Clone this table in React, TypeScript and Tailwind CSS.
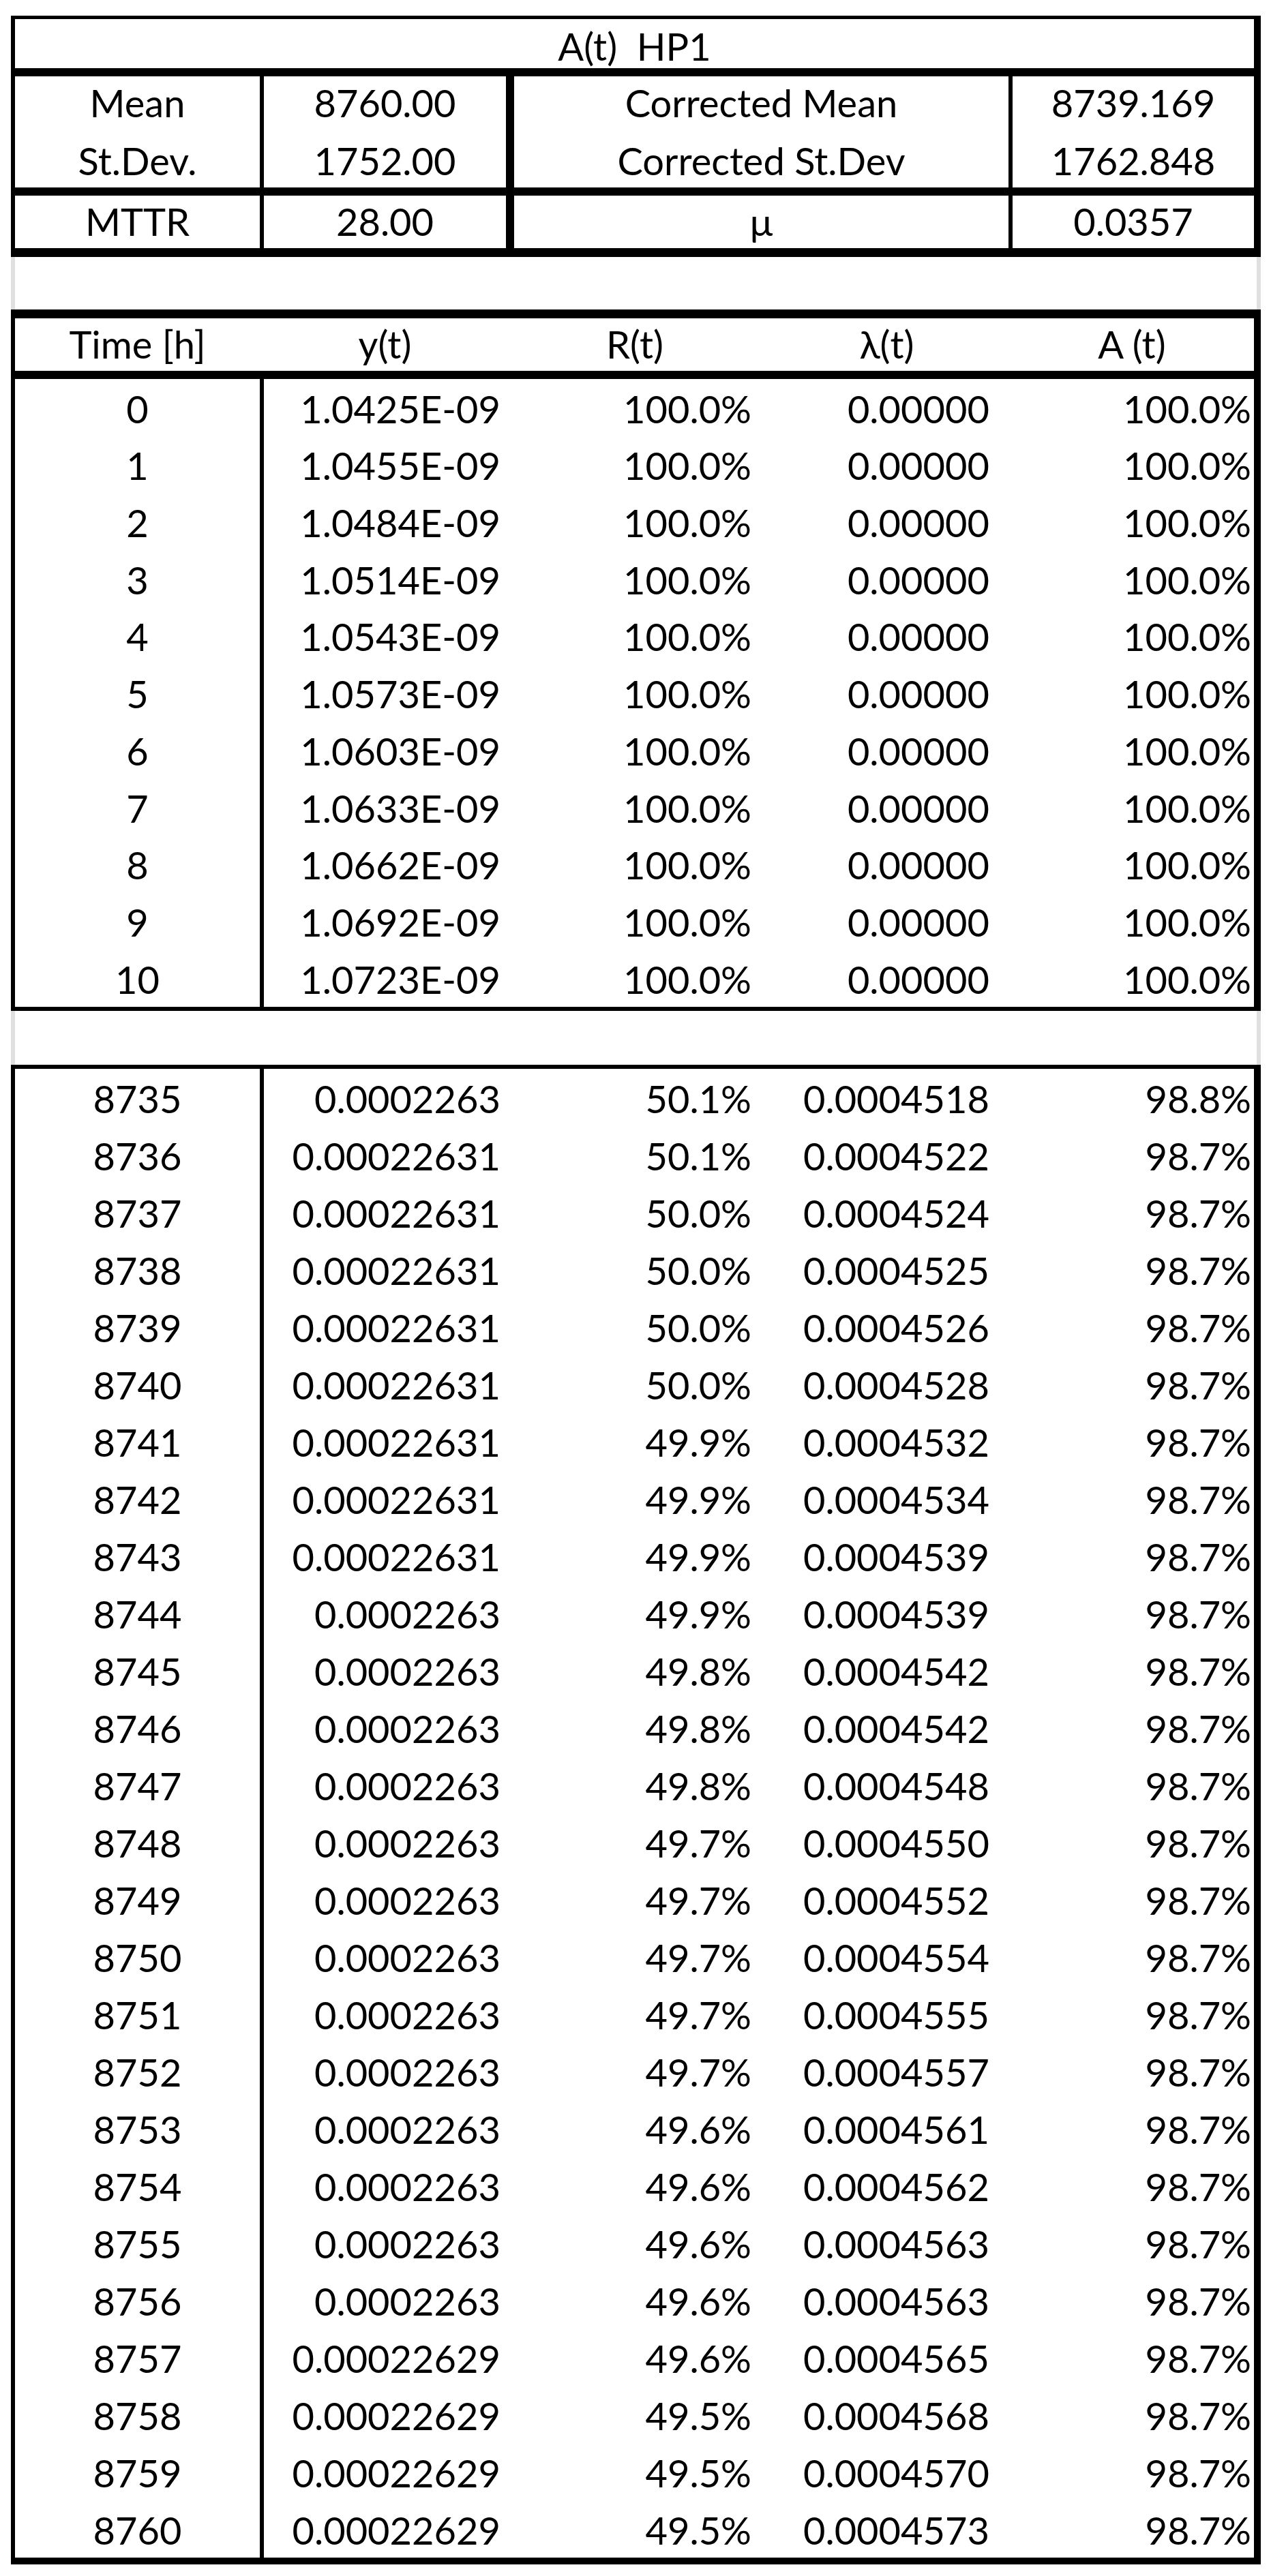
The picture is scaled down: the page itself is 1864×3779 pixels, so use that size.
import React from "react";

const top = [
  { a: "Mean", b: "8760.00", c: "Corrected Mean", e: "8739.169", h: "h-[78px]" },
  { a: "St.Dev.", b: "1752.00", c: "Corrected St.Dev", e: "1762.848", h: "h-[85px]" },
];

const early: [string, string][] = [
  ["0", "1.0425E-09"],
  ["1", "1.0455E-09"],
  ["2", "1.0484E-09"],
  ["3", "1.0514E-09"],
  ["4", "1.0543E-09"],
  ["5", "1.0573E-09"],
  ["6", "1.0603E-09"],
  ["7", "1.0633E-09"],
  ["8", "1.0662E-09"],
  ["9", "1.0692E-09"],
  ["10", "1.0723E-09"],
];

const late: [string, string, string, string, string][] = [
  ["8735", "0.0002263", "50.1%", "0.0004518", "98.8%"],
  ["8736", "0.00022631", "50.1%", "0.0004522", "98.7%"],
  ["8737", "0.00022631", "50.0%", "0.0004524", "98.7%"],
  ["8738", "0.00022631", "50.0%", "0.0004525", "98.7%"],
  ["8739", "0.00022631", "50.0%", "0.0004526", "98.7%"],
  ["8740", "0.00022631", "50.0%", "0.0004528", "98.7%"],
  ["8741", "0.00022631", "49.9%", "0.0004532", "98.7%"],
  ["8742", "0.00022631", "49.9%", "0.0004534", "98.7%"],
  ["8743", "0.00022631", "49.9%", "0.0004539", "98.7%"],
  ["8744", "0.0002263", "49.9%", "0.0004539", "98.7%"],
  ["8745", "0.0002263", "49.8%", "0.0004542", "98.7%"],
  ["8746", "0.0002263", "49.8%", "0.0004542", "98.7%"],
  ["8747", "0.0002263", "49.8%", "0.0004548", "98.7%"],
  ["8748", "0.0002263", "49.7%", "0.0004550", "98.7%"],
  ["8749", "0.0002263", "49.7%", "0.0004552", "98.7%"],
  ["8750", "0.0002263", "49.7%", "0.0004554", "98.7%"],
  ["8751", "0.0002263", "49.7%", "0.0004555", "98.7%"],
  ["8752", "0.0002263", "49.7%", "0.0004557", "98.7%"],
  ["8753", "0.0002263", "49.6%", "0.0004561", "98.7%"],
  ["8754", "0.0002263", "49.6%", "0.0004562", "98.7%"],
  ["8755", "0.0002263", "49.6%", "0.0004563", "98.7%"],
  ["8756", "0.0002263", "49.6%", "0.0004563", "98.7%"],
  ["8757", "0.00022629", "49.6%", "0.0004565", "98.7%"],
  ["8758", "0.00022629", "49.5%", "0.0004568", "98.7%"],
  ["8759", "0.00022629", "49.5%", "0.0004570", "98.7%"],
  ["8760", "0.00022629", "49.5%", "0.0004573", "98.7%"],
];

function DataRow({ t, y, r, l, a, h }: { t: string; y: string; r: string; l: string; a: string; h: string }) {
  return (
    <div className={`flex ${h}`}>
      <div className="w-[359px] flex items-end justify-center pb-[12px]">{t}</div>
      <div className="w-[361px] border-l-[6px] border-black flex items-end justify-end pr-[8px] pb-[12px]">{y}</div>
      <div className="w-[378px] flex items-end justify-end pr-[18px] pb-[12px]">{r}</div>
      <div className="w-[361px] flex items-end justify-end pr-[30px] pb-[12px]">{l}</div>
      <div className="w-[358px] flex items-end justify-end pr-[4px] pb-[12px]">{a}</div>
    </div>
  );
}

function Gap({ h }: { h: string }) {
  return (
    <div className={`w-[1833px] flex justify-between ${h}`}>
      <div className="w-[6px] h-full bg-[#e0e0e0]" />
      <div className="w-[6px] h-full bg-[#e0e0e0]" />
    </div>
  );
}

export default function App() {
  return (
    <div className="w-[1864px] h-[3779px] bg-white text-black font-['Lato'] text-[56px] leading-none pt-[23px] pl-[16px]">
      {/* Top parameter table */}
      <div className="w-[1833px] border-t-[5px] border-l-[6px] border-r-[10px] border-black">
        <div className="h-[72px] flex items-end justify-center pb-[4px] whitespace-pre">A(t)  HP1</div>
        <div className="h-[12px] bg-black" />
        {top.map((row) => (
          <div key={row.a} className={`flex ${row.h}`}>
            <div className="w-[359px] flex items-end justify-center pb-[11px]">{row.a}</div>
            <div className="w-[361px] border-l-[6px] border-black flex items-end justify-center pb-[11px]">{row.b}</div>
            <div className="w-[737px] border-l-[12px] border-black flex items-end justify-center pb-[11px]">{row.c}</div>
            <div className="w-[360px] border-l-[6px] border-black flex items-end justify-center pb-[11px]">{row.e}</div>
          </div>
        ))}
        <div className="h-[12px] bg-black" />
        <div className="flex h-[77px]">
          <div className="w-[359px] flex items-end justify-center pb-[11px]">MTTR</div>
          <div className="w-[361px] border-l-[6px] border-black flex items-end justify-center pb-[11px]">28.00</div>
          <div className="w-[737px] border-l-[12px] border-black flex items-end justify-center pb-[11px]">μ</div>
          <div className="w-[360px] border-l-[6px] border-black flex items-end justify-center pb-[11px]">0.0357</div>
        </div>
        <div className="h-[13px] bg-black" />
      </div>

      <Gap h="h-[77px]" />

      {/* First time table */}
      <div className="w-[1833px] border-t-[13px] border-l-[6px] border-r-[10px] border-b-[6px] border-black">
        <div className="flex h-[77px]">
          <div className="w-[359px] flex items-end justify-center pb-[11px]">Time [h]</div>
          <div className="w-[361px] border-l-[6px] border-transparent flex items-end justify-center pb-[11px]">y(t)</div>
          <div className="w-[378px] flex items-end justify-center pb-[11px]">R(t)</div>
          <div className="w-[361px] flex items-end justify-center pb-[11px]">λ(t)</div>
          <div className="w-[358px] flex items-end justify-center pb-[11px]">A (t)</div>
        </div>
        <div className="h-[12px] bg-black" />
        {early.map(([t, y]) => (
          <DataRow key={t} t={t} y={y} r="100.0%" l="0.00000" a="100.0%" h="h-[83.7px]" />
        ))}
      </div>

      <Gap h="h-[79px]" />

      {/* Second time table */}
      <div className="w-[1833px] border-t-[6px] border-l-[6px] border-r-[10px] border-b-[10px] border-black">
        {late.map(([t, y, r, l, a]) => (
          <DataRow key={t} t={t} y={y} r={r} l={l} a={a} h="h-[84px]" />
        ))}
      </div>
    </div>
  );
}
